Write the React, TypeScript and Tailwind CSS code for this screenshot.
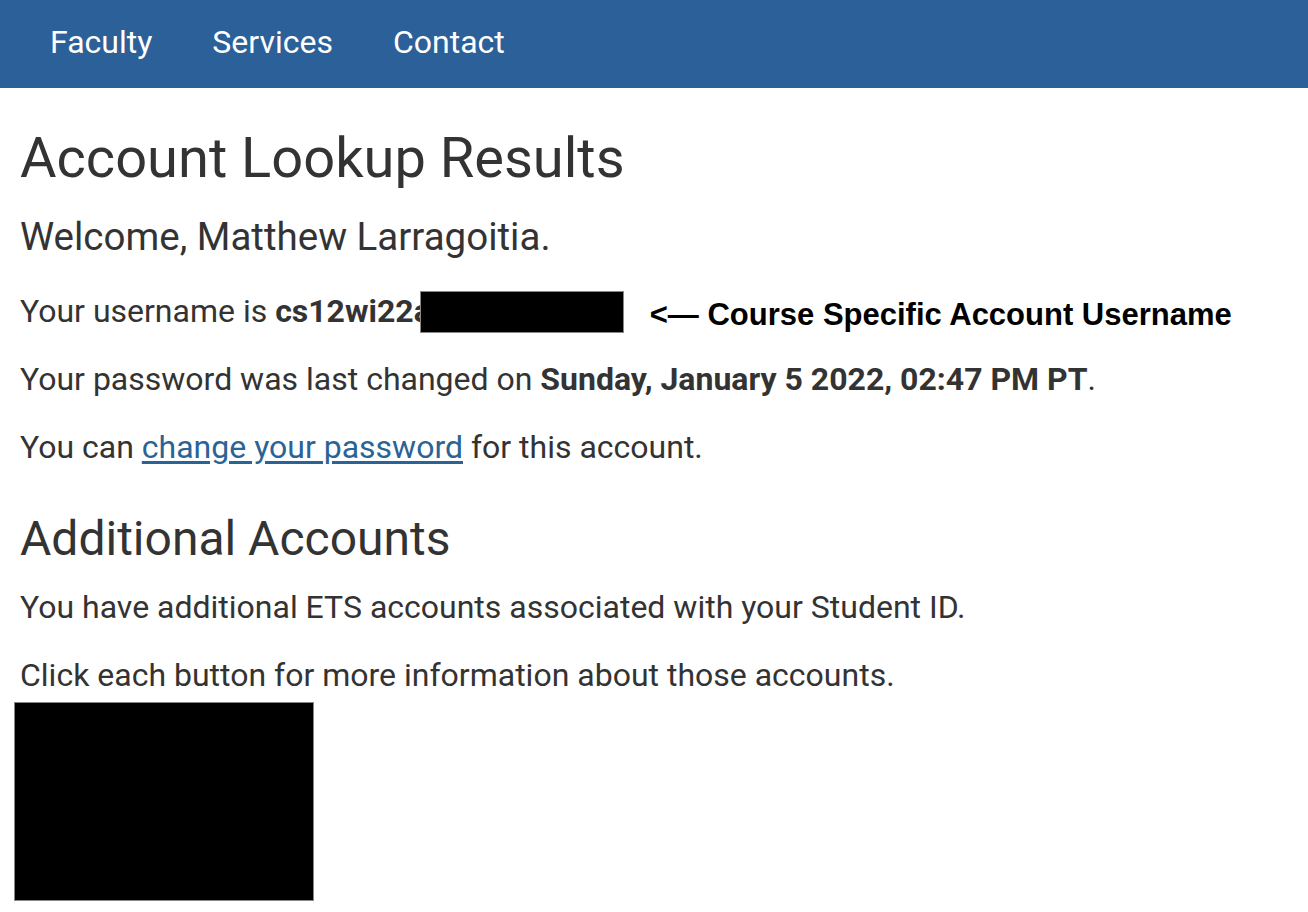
export default function App() {
    const navItems = ["Faculty", "Services", "Contact"];

    return (
        <div className="min-h-[912px] bg-white text-[#333333] font-['Roboto',sans-serif]">
            <nav className="h-[88px] bg-[#2c6098] flex items-start pl-[20px]">
                {navItems.map((item) => (
                    <a key={item} href="#" className="px-[30px] text-[32px] leading-[84px] text-white">
                        {item}
                    </a>
                ))}
            </nav>

            <main className="pl-[20px]">
                <h1 className="mt-[38px] text-[56px] leading-[64px]">Account Lookup Results</h1>
                <p className="mt-[23px] text-[38.5px] leading-[48px]">Welcome, Matthew Larragoitia.</p>

                <p className="mt-[30px] h-[40px] text-[32px] leading-[40px] whitespace-nowrap">
                    Your username is <b className="font-bold">cs12wi22a</b>
                    <span className="inline-block -ml-[11px] w-[204px] h-[42px] bg-black border border-[#888888] align-[-11px]"></span>
                    <span className="inline-block ml-[26px] text-[31px] leading-[40px] font-bold text-black font-['Liberation_Sans',Arial,sans-serif] align-[-3px]">
                        &lt;— Course Specific Account Username
                    </span>
                </p>
                <p className="mt-[28px] text-[32px] leading-[40px]">
                    Your password was last changed on <b className="font-bold">Sunday, January 5 2022, 02:47 PM PT</b>.
                </p>
                <p className="mt-[28px] text-[32px] leading-[40px]">
                    You can <a href="#" className="text-[#2a6496] underline underline-offset-[3px]">change your password</a> for this account.
                </p>

                <h2 className="mt-[44px] text-[48px] leading-[56px]">Additional Accounts</h2>
                <p className="mt-[20px] text-[32px] leading-[40px]">
                    You have additional ETS accounts associated with your Student ID.
                </p>
                <p className="mt-[28px] text-[32px] leading-[40px]">
                    Click each button for more information about those accounts.
                </p>

                <div className="mt-[7px] -ml-[6px] w-[300px] h-[199px] bg-black border border-[#888888]"></div>
            </main>
        </div>
    );
}
